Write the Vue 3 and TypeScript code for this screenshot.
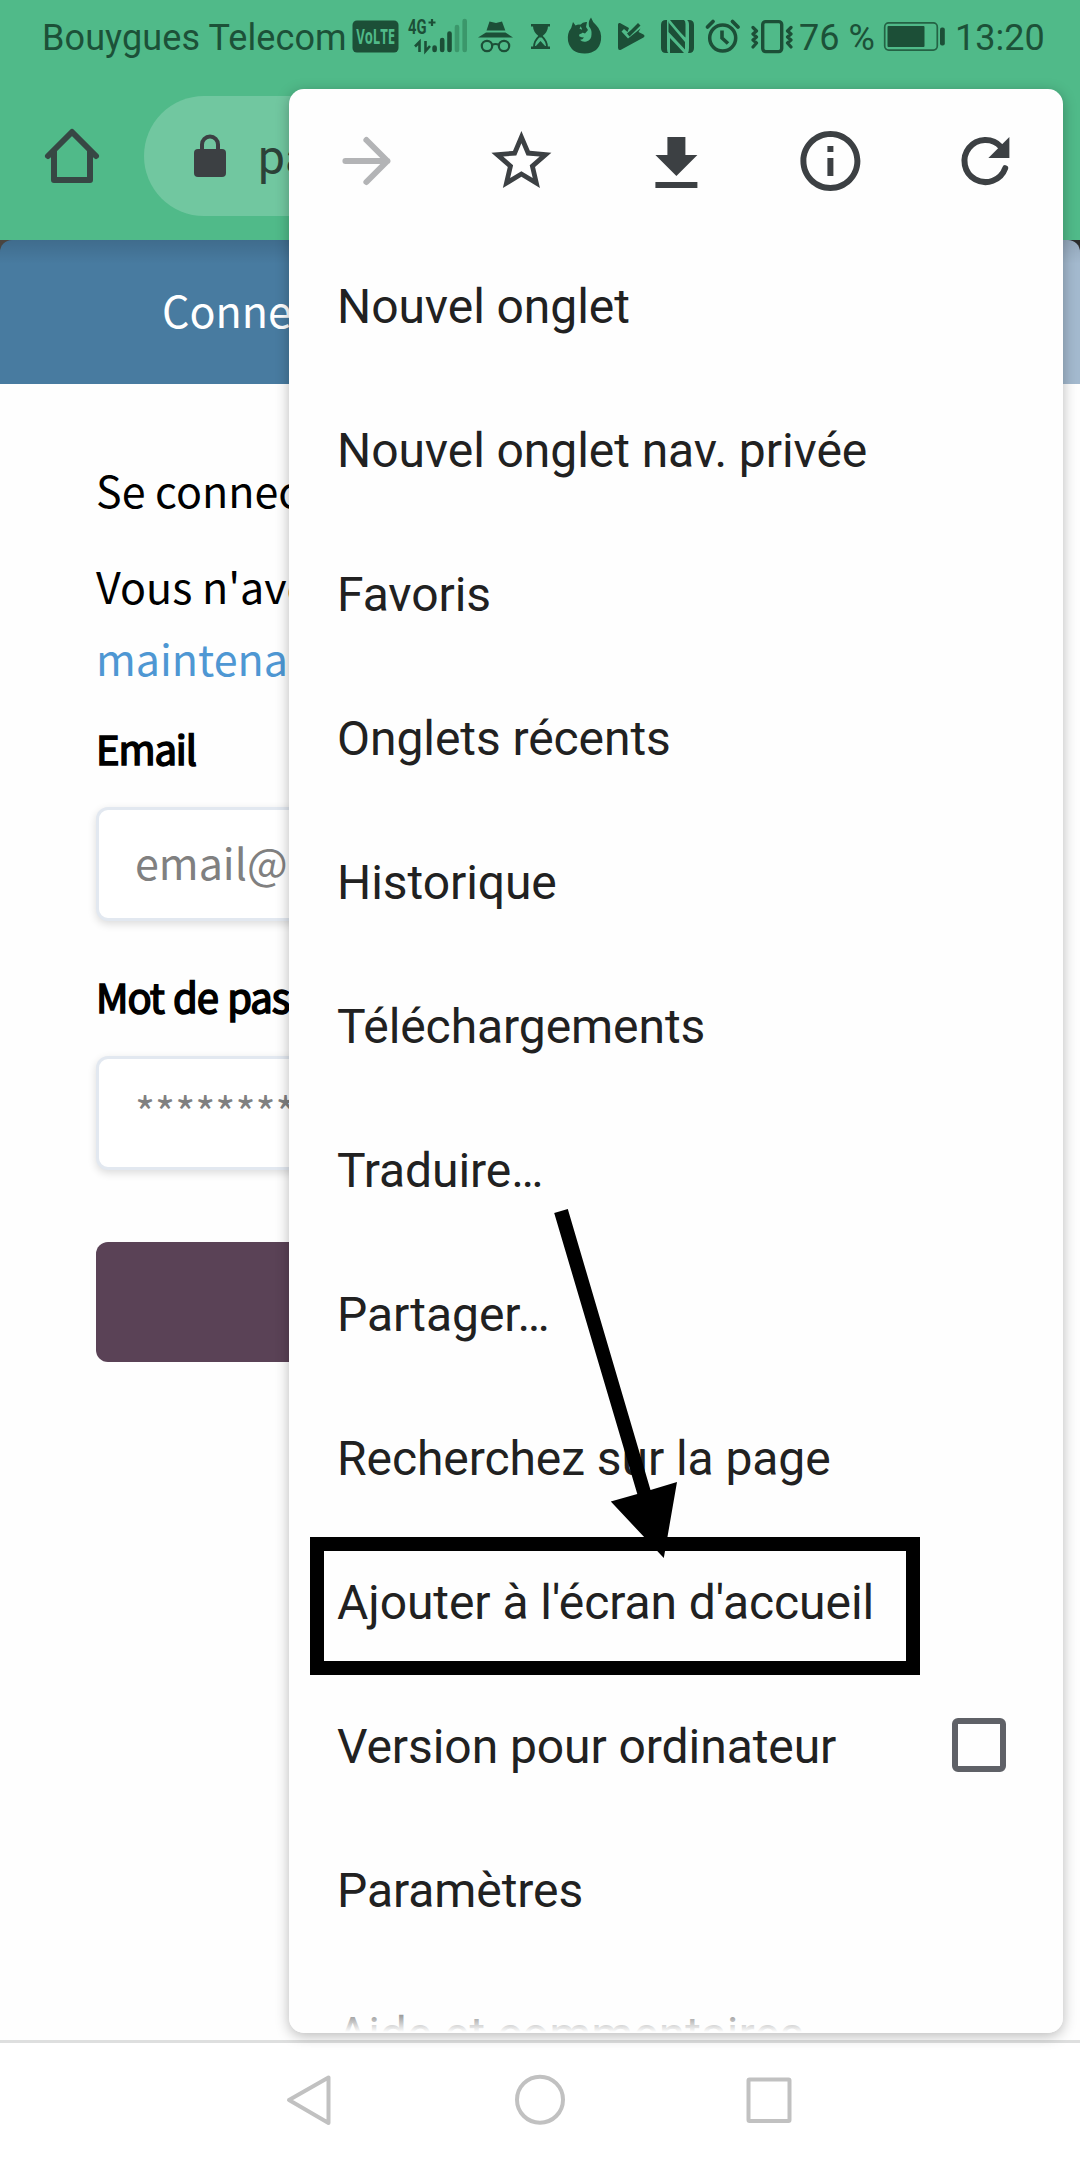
<script setup lang="ts">
interface MenuItem {
  label: string
  checkbox?: boolean
}

const items: MenuItem[] = [
  { label: 'Nouvel onglet' },
  { label: 'Nouvel onglet nav. privée' },
  { label: 'Favoris' },
  { label: 'Onglets récents' },
  { label: 'Historique' },
  { label: 'Téléchargements' },
  { label: 'Traduire…' },
  { label: 'Partager…' },
  { label: 'Recherchez sur la page' },
  { label: "Ajouter à l'écran d'accueil" },
  { label: 'Version pour ordinateur', checkbox: true },
  { label: 'Paramètres' },
  { label: 'Aide et commentaires' },
]
</script>

<template>
  <div class="screen">
    <header class="chrome">
      <div class="status">
        <span class="carrier">Bouygues Telecom</span>
        <svg width="56" height="72" viewBox="348 0 56 72">
          <rect x="352.500" y="20.500" width="46" height="32" rx="4.500" />
          <text x="375.700" y="43.500" class="volte" text-anchor="middle" textLength="39" lengthAdjust="spacingAndGlyphs">VoLTE</text>
        </svg>
        <svg width="68" height="72" viewBox="404 0 68 72">
          <text x="408" y="33.800" class="net" textLength="18.500" lengthAdjust="spacingAndGlyphs">4G</text>
          <path d="M432 19v7M428.500 22.500h7" stroke-width="2.200" class="line" />
          <path d="M415 46.500l4.500-4.500V52M425.500 41v10l4.500-5" stroke-width="2.600" class="line" />
          <path d="M434.600 47.500v2.500M442.200 40v10M449.500 33.500v16.500" stroke-width="4.600" stroke-linecap="round" class="line" />
          <path d="M457 27v23M464.700 21v29" stroke-width="4.600" stroke-linecap="round" class="line faint" />
        </svg>
        <svg width="48" height="72" viewBox="472 0 48 72">
          <path d="M486.500 30.500l3-9 6.500 1.500 6-1.500 3.300 9zM478 37.500l8-5h19.500l7.500 5z" />
          <circle cx="487" cy="46" r="5.200" class="line" stroke-width="2.200" />
          <circle cx="504" cy="46" r="5.200" class="line" stroke-width="2.200" />
          <path d="M492 45q3.500-2 7 0" class="line" stroke-width="2" />
        </svg>
        <svg width="40" height="72" viewBox="520 0 40 72">
          <path d="M531 24h19v2.500h-19zM531 46.500h19V49h-19z" />
          <path d="M533 26h15q0 6-6 10.500h-3Q533 32 533 26z" />
          <path d="M534 47q0-6 5-10.500h3q5 4.500 5 10.500z" class="line" stroke-width="1.800" />
          <path d="M535 47l5.500-6 5.500 6z" />
        </svg>
        <svg width="48" height="72" viewBox="560 0 48 72">
          <path d="M573 22l2.500 3.500q3-1.500 6-.5l-2 3.500 4.500 2.500-2.500 2.500q-3.500.5-2 3 2 1 4.500 1-1.500 2.500-4 2.200 2.500 3 6.500 1.800 5-1.500 5-7 .5-5-2.500-8-1-5 2-9 1.500 4.500 5 7.500 6 6 5 15-2 13-16 13.500-14 .3-17-12.500-1-8 3.200-13z" />
          <path d="M580 25q3-3.500 7-3l-1 5 2 3-3 3.500-4-1.500 1-3z" />
        </svg>
        <svg width="44" height="72" viewBox="608 0 44 72">
          <path d="M618 24.500q0-2 2-1.500l9 5-1.500 4-3.500-3-2.500 2.500 6.500 7L640.500 28.500l-2 3.500 5 2.500q2 1.500 0 3L621 49.800q-3 1-3-2z" />
          <path d="M631 30l7-7 2.500 2.500-11 11-2.500-3z" />
        </svg>
        <svg width="48" height="72" viewBox="652 0 48 72">
          <path d="M667 20h-1q-5 0-5 5v23q0 5 5 5h2.500q-1.500-1-1.500-4zM670 20q13 16 15.500 17.500V24q0-3-1.500-4zM670 25v28h14Q672.500 40.500 670 38zM687 20h2q5 0 5 5v23q0 5-5 5h-1q1-2 1-5V25q0-4-2-5z" />
          <path d="M668.500 21v11l16.500 17.500V42L669 23z" />
        </svg>
        <svg width="45" height="72" viewBox="700 0 45 72">
          <circle cx="722.700" cy="38" r="13" class="line" stroke-width="3.500" />
          <path d="M722 30.500V38l6 5.500" class="line" stroke-width="3.600" />
          <path d="M707.500 27l5.500-5.500M738 27l-5.500-5.500" class="line" stroke-width="3.800" stroke-linecap="round" />
        </svg>
        <svg width="54" height="72" viewBox="745 0 54 72">
          <rect x="762.700" y="21.600" width="19" height="30" rx="3" class="line" stroke-width="3.400" />
          <path d="M753 27.500l3.500 3.500-3.500 3 3.500 3-3.500 3 3.500 3-3.500 4M791 27.500l-3.500 3.500 3.500 3-3.500 3 3.500 3-3.500 3 3.500 4" class="line" stroke-width="3.200" stroke-linecap="round" stroke-linejoin="round" />
        </svg>
        <span class="percent">76 %</span>
        <svg width="74" height="72" viewBox="881 0 74 72">
          <rect x="884.700" y="22.900" width="52.600" height="27.200" rx="4" class="line thin" stroke-width="1.700" />
          <rect x="887.500" y="26" width="37" height="21" rx="1" />
          <rect x="940" y="27.500" width="4.800" height="18" rx="2" />
        </svg>
        <span class="clock">13:20</span>
      </div>
      <div class="toolbar">
        <svg class="home" width="72" height="72" viewBox="0 0 24 24">
          <path d="M4 12l8-8 8 8M6 10.500V20h12v-9.500" fill="none" stroke="#374744" stroke-width="2" stroke-linecap="round" stroke-linejoin="round" />
        </svg>
        <div class="omnibox">
          <svg width="32" height="44" viewBox="0 0 32 44">
            <rect x="0" y="15" width="32" height="28" rx="4" fill="#3c4043" />
            <path d="M8 17V10.500a8 8 0 0 1 16 0V17" fill="none" stroke="#3c4043" stroke-width="4" />
          </svg>
          <span>pa</span>
        </div>
      </div>
    </header>

    <main class="page">
      <nav class="tabs">
        <div class="tab active"><span>Conne</span></div>
        <div class="tab"></div>
      </nav>
      <form class="form" @submit.prevent>
        <p>Se connec</p>
        <p>Vous n'ave<br /><a>maintena</a></p>
        <label>Email</label>
        <div class="field">email@</div>
        <label class="second">Mot de pass</label>
        <div class="field stars">********</div>
        <button type="submit"></button>
      </form>
    </main>

    <footer class="navbar">
      <svg width="1080" height="117" viewBox="0 2043 1080 117">
        <g fill="none" stroke="#c1c1c1" stroke-width="4" stroke-linejoin="round">
          <path d="M328.500 2077.500v45.500L289 2100z" />
          <circle cx="540" cy="2099.700" r="23" />
          <rect x="748.500" y="2079.500" width="41" height="41.500" rx="1" />
        </g>
      </svg>
    </footer>

    <aside class="menu">
      <div class="actions">
        <svg viewBox="0 0 24 24"><path d="M5 12h14M12 5l7 7-7 7" fill="none" stroke="#b3b4b6" stroke-width="2" stroke-linecap="round" stroke-linejoin="round" /></svg>
        <svg viewBox="0 0 24 24"><path d="M22 9.240l-7.190-.62L12 2 9.190 8.630 2 9.240l5.460 4.730L5.820 21 12 17.270 18.180 21l-1.630-7.030L22 9.240zM12 15.400l-3.760 2.270 1-4.280-3.320-2.880 4.380-.38L12 6.100l1.710 4.040 4.380.38-3.320 2.880 1 4.280L12 15.400z" /></svg>
        <svg viewBox="0 0 24 24"><path d="M19 10h-4V4H9v6H5l7 7 7-7zM5 19v2h14v-2H5z" /></svg>
        <svg viewBox="0 0 24 24"><path d="M11 7h2v2h-2zm0 4h2v6h-2zm1-9C6.480 2 2 6.480 2 12s4.480 10 10 10 10-4.480 10-10S17.520 2 12 2zm0 18c-4.410 0-8-3.590-8-8s3.590-8 8-8 8 3.590 8 8-3.590 8-8 8z" /></svg>
        <svg viewBox="0 0 24 24">
          <path d="M17.200 7.300A7 7 0 1 0 18.600 14.400" fill="none" stroke="#3c4043" stroke-width="2" stroke-linecap="round" />
          <path d="M20 4v7h-7z" />
        </svg>
      </div>
      <ul>
        <li v-for="item in items" :key="item.label">
          <span>{{ item.label }}</span>
          <i v-if="item.checkbox" class="box"></i>
        </li>
      </ul>
      <div class="fade"></div>
    </aside>

    <div class="highlight"></div>
    <svg class="pointer" width="130" height="360" viewBox="550 1205 130 360">
      <path d="M554.200 1213l13.600-4 82.700 281 26.500-8-13.200 76-53-56.500 26.500-7.500z" />
    </svg>
  </div>
</template>

<style>
body {
  margin: 0;
}
</style>

<style scoped>
.screen {
  position: relative;
  display: flex;
  flex-direction: column;
  width: 1080px;
  height: 2160px;
  overflow: hidden;
  background: #fefefe;
  font-family: Roboto, sans-serif;
}

svg {
  display: block;
  flex: none;
}

.chrome {
  height: 240px;
  background: #50ba89;
}

.status {
  display: flex;
  height: 72px;
  color: #1c5138;
  fill: #1c4f37;
  font-size: 36px;
  line-height: 77px;
  white-space: nowrap;
}

.carrier {
  width: 306px;
  padding-left: 42px;
  letter-spacing: 0.1px;
}

.percent {
  width: 82px;
}

.line {
  fill: none;
  stroke: #1c4f37;
}

.faint {
  stroke: #3b976b;
}

.thin {
  stroke: #246244;
}

.volte {
  fill: #50ba89;
  font: 700 21px 'Open Sans', sans-serif;
}

.net {
  font: 700 20px Roboto, sans-serif;
}

.toolbar {
  display: flex;
  align-items: center;
  height: 168px;
}

.home {
  margin: 0 36px;
}

.omnibox {
  display: flex;
  flex: 1;
  align-items: center;
  box-sizing: border-box;
  height: 120px;
  margin-right: 240px;
  padding-left: 50px;
  border-radius: 60px;
  background: #71c7a0;
  color: #2c4238;
  font-size: 48px;
}

.omnibox span {
  margin: 3px 0 0 32px;
}

.page {
  flex: 1;
  font-family: 'Noto Sans CJK JP', 'Noto Sans CJK SC', sans-serif;
  font-size: 43px;
  line-height: 72px;
  color: #000;
  white-space: nowrap;
}

.tabs {
  display: flex;
  height: 144px;
  background: linear-gradient(90deg, #4a4540 50%, #2b2d2c 50%);
}

.tab {
  flex: 1;
  background: linear-gradient(rgba(0, 0, 0, 0.1), transparent 24px) #a3b9ce;
  border-top-right-radius: 12px;
}

.tab.active {
  background: linear-gradient(rgba(0, 0, 0, 0.12), transparent 24px) #487ba0;
  border-radius: 12px 0 0;
  color: #fff;
  line-height: 138px;
  text-indent: 162px;
}

.form {
  display: flex;
  flex-direction: column;
  padding: 69px 96px 0;
}

p {
  margin: 0 0 24px;
}

a {
  color: #4e97d3;
}

label {
  height: 60px;
  margin: 1px 0 29px;
  font-size: 40px;
  line-height: 60px;
  letter-spacing: -1.1px;
  word-spacing: 1.5px;
  -webkit-text-stroke: 1.6px #000;
}

label.second {
  margin: 45px 0 30px;
}

.field {
  box-sizing: border-box;
  height: 114px;
  padding-left: 36px;
  border: 3px solid #e2e8f0;
  border-radius: 12px;
  background: #fff;
  box-shadow: 0 3px 9px rgba(0, 0, 0, 0.14);
  color: #808080;
  line-height: 102px;
}

button {
  height: 120px;
  margin-top: 72px;
  padding: 0;
  border: 0;
  border-radius: 12px;
  background: #5a4256;
}

.navbar {
  height: 117px;
  border-top: 3px solid #dedfdf;
  background: #fff;
}

.menu {
  position: absolute;
  top: 89px;
  left: 289px;
  width: 774px;
  height: 1944px;
  overflow: hidden;
  border-radius: 15px;
  background: #fefefe;
  box-shadow: 0 3px 14px rgba(0, 0, 0, 0.28);
  color: #212121;
  font-size: 48px;
  letter-spacing: -0.07px;
}

.actions {
  display: flex;
  height: 145px;
  fill: #3c4043;
}

.actions svg {
  flex: 1;
  height: 72px;
  margin-top: 36px;
}

ul {
  margin: 0;
  padding: 0;
  list-style: none;
}

li {
  display: flex;
  align-items: center;
  justify-content: space-between;
  height: 144px;
  padding: 0 57px 0 48px;
  white-space: nowrap;
}

.box {
  box-sizing: border-box;
  width: 54px;
  height: 54px;
  margin-top: -2px;
  border: 6px solid #5f6167;
  border-radius: 6px;
}

.fade {
  position: absolute;
  right: 0;
  bottom: 0;
  left: 0;
  height: 30px;
  background: linear-gradient(rgba(254, 254, 254, 0.4), rgba(254, 254, 254, 0.55) 12px, #fefefe 29px);
}

.highlight {
  position: absolute;
  top: 1537px;
  left: 310px;
  box-sizing: border-box;
  width: 610px;
  height: 138px;
  border: 14px solid #000;
}

.pointer {
  position: absolute;
  top: 1205px;
  left: 550px;
}
</style>
